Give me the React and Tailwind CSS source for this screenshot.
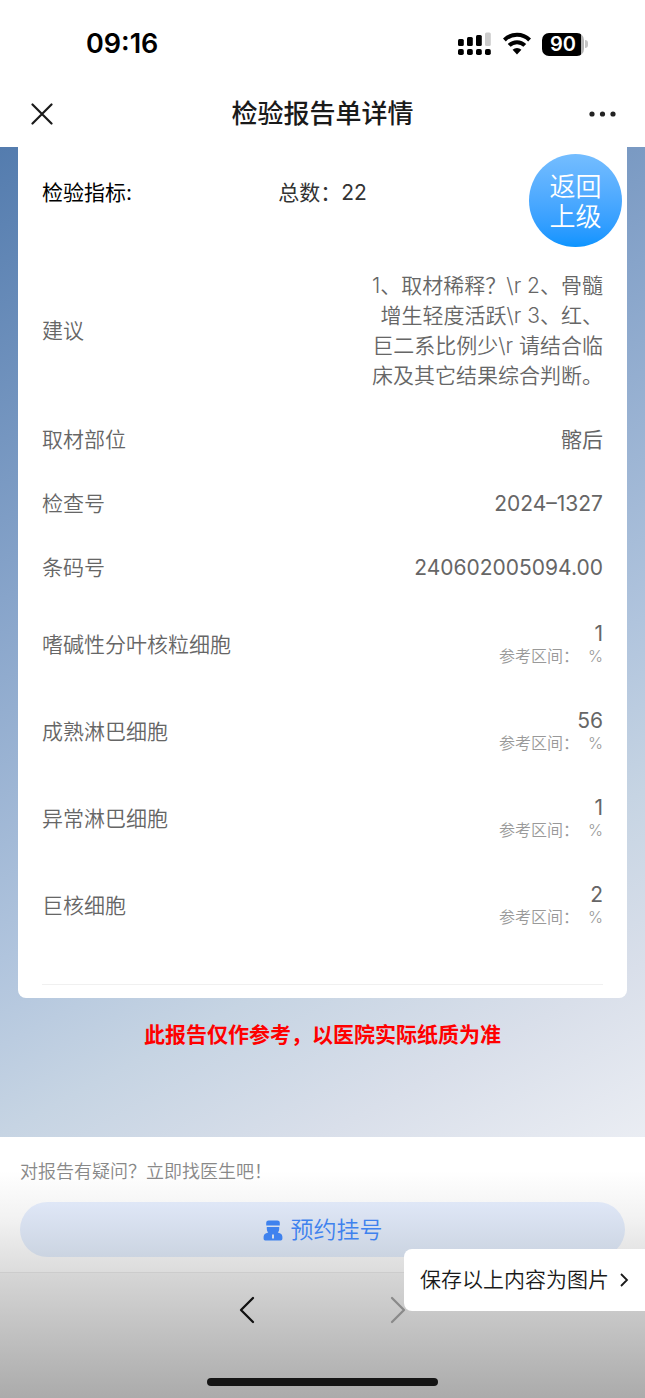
const infoRows = [
  { label: "取材部位", value: "髂后" },
  { label: "检查号", value: "2024–1327" },
  { label: "条码号", value: "240602005094.00" }
];

const resultRows = [
  { label: "嗜碱性分叶核粒细胞", value: "1", unit: "%" },
  { label: "成熟淋巴细胞", value: "56", unit: "%" },
  { label: "异常淋巴细胞", value: "1", unit: "%" },
  { label: "巨核细胞", value: "2", unit: "%" }
];

const advice = "1、取材稀释？\\r 2、骨髓增生轻度活跃\\r 3、红、巨二系比例少\\r 请结合临床及其它结果综合判断。";

function SignalIcon() {
  return (
    <svg width="34" height="24" viewBox="0 0 34 24" aria-hidden="true">
      <rect x="0" y="7" width="5.8" height="7" rx="1.5" />
      <rect x="9" y="5" width="5.8" height="9" rx="1.5" />
      <rect x="18" y="3" width="5.8" height="11" rx="1.5" />
      <rect x="27" y="0.5" width="5.8" height="13.5" rx="1.5" fill="#cccccc" />
      {[0, 9, 18, 27].map((x) => <rect key={x} x={x} y="17" width="5.8" height="6" rx="1.8" />)}
    </svg>
  );
}

function WifiIcon() {
  return (
    <svg width="28" height="24" viewBox="0 0 28 24" fill="none" aria-hidden="true">
      <path d="M1.4 8 A17.8 17.8 0 0 1 26.6 8" stroke="#000" strokeWidth="4" />
      <path d="M6.2 13.4 A11 11 0 0 1 21.8 13.4" stroke="#000" strokeWidth="4" />
      <path d="M14 22.5 L9.6 17.8 A6.2 6.2 0 0 1 18.4 17.8 Z" fill="#000" />
    </svg>
  );
}

function Battery() {
  return (
    <div className="flex items-center gap-px">
      <div className="flex h-[23px] w-[42px] items-center justify-center rounded-[7px] bg-linear-to-r from-black from-92% to-[#b5b5b5] to-92% text-[20px] leading-none font-semibold text-white">90</div>
      <span className="h-2 w-[3px] rounded-r-full bg-[#c4c4c4]" />
    </div>
  );
}

function Chevron({ flip }) {
  return (
    <svg width="16" height="28" viewBox="0 0 16 28" fill="none" stroke="currentColor" strokeWidth="2.3" strokeLinecap="round" strokeLinejoin="round" aria-hidden="true">
      <path d={flip ? "M2 2 L14 14 L2 26" : "M14 2 L2 14 L14 26"} />
    </svg>
  );
}

function DoctorIcon() {
  return (
    <svg width="20" height="22" viewBox="0 0 20 22" fill="currentColor" aria-hidden="true">
      <path d="M3.2 6.4 V3.8 Q3.2 1.4 5.6 1.4 H14.4 Q16.8 1.4 16.8 3.8 V6.4 Z" />
      <path fillRule="evenodd" d="M3.8 8 H16.2 V10 Q16.2 12.4 14.8 13.6 L17.4 14.6 Q19.4 15.6 19.4 17.8 V19.8 Q19.4 21.4 17.8 21.4 H2.2 Q0.6 21.4 0.6 19.8 V17.8 Q0.6 15.6 2.6 14.6 L5.2 13.6 Q3.8 12.4 3.8 10 Z M9 16 V19.6 H11 V16 L10 15 Z" />
    </svg>
  );
}

export default function App() {
  return (
    <div lang="zh-CN" className="relative flex min-h-screen flex-col bg-white font-['Inter','Noto_Sans_CJK_SC',sans-serif] text-[21px] leading-[30px] text-[#666666]">
      <header className="bg-white text-black">
        <div className="flex h-20 items-center justify-between pt-2 pr-[57px] pl-[86px]">
          <time className="text-[27px] font-semibold">09:16</time>
          <div className="flex items-center gap-[11px]">
            <SignalIcon />
            <WifiIcon />
            <Battery />
          </div>
        </div>
        <div className="flex h-[67px] items-center justify-between px-[26px]">
          <button type="button" aria-label="关闭" className="grid h-8 w-8 place-items-center">
            <svg width="22" height="22" viewBox="0 0 22 22" fill="none" stroke="#1a1a1a" strokeWidth="2.2" strokeLinecap="round">
              <path d="M1.5 1.5 L20.5 20.5 M20.5 1.5 L1.5 20.5" />
            </svg>
          </button>
          <h1 className="text-[26px] font-medium text-[#1a1a1a]">检验报告单详情</h1>
          <button type="button" aria-label="更多" className="grid h-8 w-8 place-items-center">
            <svg width="28" height="6" viewBox="0 0 28 6" fill="#222222">
              <circle cx="3" cy="3" r="2.6" />
              <circle cx="13.5" cy="3" r="2.6" />
              <circle cx="24" cy="3" r="2.6" />
            </svg>
          </button>
        </div>
      </header>

      <main className="relative flex-1 bg-[linear-gradient(152deg,#547cae_0%,#87a4ca_34%,#b0c4dd_61%,#c6d4e3_74%,#d9dfea_87%,#eaedf3_100%)] px-[18px] pb-[86px]">
        <section className="rounded-b-lg bg-white px-6 pb-[13px]">
          <div className="grid grid-cols-3 pt-[31px] pb-[46px]">
            <h2 className="text-black">检验指标:</h2>
            <p className="text-center text-[#333333]">总数：22</p>
          </div>
          <dl>
            <div className="flex items-center justify-between py-[17px]">
              <dt className="font-[350]">建议</dt>
              <dd className="w-[242px] text-right font-[350]">{advice}</dd>
            </div>
            {infoRows.map((row) => (
              <div key={row.label} className="flex items-center justify-between py-[17px]">
                <dt className="font-[350]">{row.label}</dt>
                <dd>{row.value}</dd>
              </div>
            ))}
          </dl>
          <dl className="pt-px">
            {resultRows.map((row) => (
              <div key={row.label} className="flex h-[87px] items-center justify-between">
                <dt className="font-[350]">{row.label}</dt>
                <dd className="text-right leading-[22px]">
                  <p>{row.value}</p>
                  <p className="text-[16px] font-[350] text-[#999999]">参考区间：&nbsp; {row.unit}</p>
                </dd>
              </div>
            ))}
          </dl>
          <hr className="mt-[35px] border-[#f0f0f0]" />
        </section>
        <p className="pt-[22px] text-center font-bold text-[#ff0000]">此报告仅作参考，以医院实际纸质为准</p>
        <button type="button" className="absolute top-[7px] right-[23px] h-[93px] w-[93px] rounded-full bg-linear-to-b from-[#74bdff] to-[#0a94ff] px-5 pt-[2px] text-[26px] font-[350] text-white">返回上级</button>
      </main>

      <footer>
        <div className="bg-linear-to-b from-white from-25% via-[#f2f2f2] via-60% to-[#dcdcdc] px-5 pt-5 pb-[15px]">
          <p className="text-[18px] font-[350] text-[#888888]">对报告有疑问？立即找医生吧！</p>
          <button type="button" className="mt-[15px] flex h-[55px] w-full items-center justify-center gap-2 rounded-full bg-linear-to-b from-[#dfe7f7] to-[#cbd4e1] text-[23px] font-[350] text-[#3f82ee]">
            <DoctorIcon />
            预约挂号
          </button>
        </div>
        <nav className="flex h-[126px] flex-col items-center justify-between border-t border-[#cccccc] bg-linear-to-b from-[#d6d6d6] to-[#ababab] pt-[23px] pb-3">
          <div className="flex gap-[135px]">
            <button type="button" aria-label="后退" className="text-[#111111]"><Chevron /></button>
            <button type="button" aria-label="前进" className="text-[#8a8a8a]" disabled><Chevron flip /></button>
          </div>
          <div className="h-2 w-[231px] rounded-full bg-[#151515]" />
        </nav>
      </footer>

      <button type="button" className="absolute right-0 bottom-[87px] flex h-[62px] items-center gap-[10px] rounded-l-lg bg-white px-4 font-[350] text-[#1a1a1a]">
        保存以上内容为图片
        <svg width="10" height="14" viewBox="0 0 10 14" fill="none" stroke="currentColor" strokeWidth="1.8" aria-hidden="true">
          <path d="M2 1 L8 7 L2 13" />
        </svg>
      </button>
    </div>
  );
}
